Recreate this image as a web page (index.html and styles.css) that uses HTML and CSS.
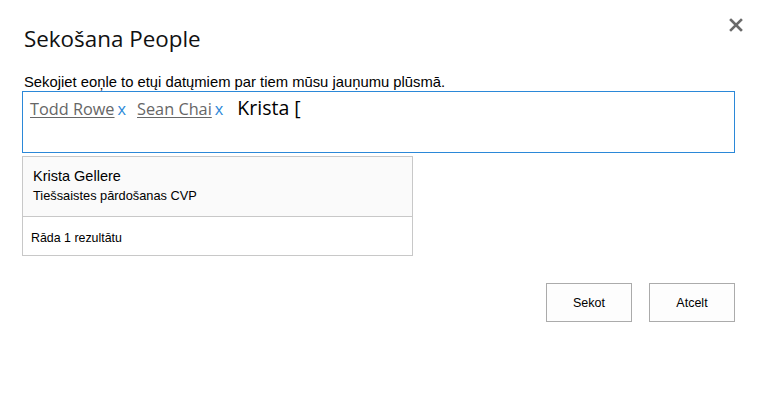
FILE: index.html
```html
<!DOCTYPE html>
<html lang="lv">
<head>
<meta charset="UTF-8" />
<title>Sekošana People</title>
<link rel="stylesheet" href="styles.css">
</head>
<body>
  <div class="dialog">
    <div class="dialog-head">
      <h1>Sekošana People</h1>
      <button class="close-btn" type="button" aria-label="Aizvērt">
        <svg width="14" height="14" viewBox="0 0 14 14"><path d="M2 2 L12 12 M12 2 L2 12" stroke="#6b6b6b" stroke-width="2.6" stroke-linecap="square"/></svg>
      </button>
    </div>

    <p class="hint">Sekojiet eon̦le to etųi datųmiem par tiem mūsu jauņumu plūsmā.</p>

    <div class="picker">
      <span class="token"><span class="token-name">Todd Rowe</span><span class="token-x">x</span></span>
      <span class="token"><span class="token-name">Sean Chai</span><span class="token-x">x</span></span>
      <span class="typed">Krista [</span>
    </div>

    <div class="suggest">
      <div class="suggest-item">
        <div class="suggest-name">Krista Gellere</div>
        <div class="suggest-title">Tiešsaistes pārdošanas CVP</div>
      </div>
      <div class="suggest-foot">Rāda 1 rezultātu</div>
    </div>

    <div class="actions">
      <button type="button" class="btn">Sekot</button>
      <button type="button" class="btn">Atcelt</button>
    </div>
  </div>
</body>
</html>
```
FILE: styles.css
```css
* {
  box-sizing: border-box;
}
body {
  margin: 0;
  background: #fff;
  color: #000;
  font-family: 'Liberation Sans', Arial, sans-serif;
}
.dialog {
  width: 763px;
  padding: 15px 28px 0 22px;
}
.dialog-head {
  display: flex;
  justify-content: space-between;
  align-items: flex-start;
  padding-left: 2px;
}
.dialog-head h1 {
  margin: 9px 0 0;
  font-family: 'Open Sans', sans-serif;
  font-weight: 400;
  font-size: 22.4px;
  line-height: 30px;
  color: #111;
}
.close-btn {
  border: none;
  background: none;
  padding: 0;
  margin: 3px -8px 0 0;
  width: 14px;
  height: 14px;
  cursor: pointer;
}
.hint {
  margin: 20px 0 0 2px;
  font-size: 14.8px;
  line-height: 17px;
}
.picker {
  height: 62px;
  border: 1px solid #2b88d8;
  padding: 3px 7px;
  display: flex;
  align-items: baseline;
  gap: 11px;
  font-family: 'Open Sans', sans-serif;
}
.token {
  font-size: 16.3px;
  line-height: 24px;
}
.token-name {
  color: #666;
  text-decoration: underline;
  text-underline-offset: 2px;
}
.token-x {
  color: #2b88d8;
  margin-left: 3px;
}
.typed {
  margin-left: 3px;
  font-size: 19.5px;
  line-height: 26px;
  color: #000;
}
.suggest {
  width: 391px;
  margin-top: 3px;
  border: 1px solid #c8c8c8;
}
.suggest-item {
  background: #fafafa;
  padding: 10px 10px 12px;
  border-bottom: 1px solid #c8c8c8;
}
.suggest-name {
  font-size: 14.5px;
  line-height: 19px;
}
.suggest-title {
  margin-top: 2px;
  font-size: 12.8px;
  line-height: 16px;
}
.suggest-foot {
  padding: 13px 8px 9px;
  font-size: 12.4px;
  line-height: 16px;
}
.actions {
  display: flex;
  justify-content: flex-end;
  gap: 17px;
  margin-top: 27px;
}
.btn {
  width: 86px;
  height: 39px;
  border: 1px solid #ababab;
  background: #fdfdfd;
  font-family: 'Liberation Sans', Arial, sans-serif;
  font-size: 12.5px;
  color: #000;
  cursor: pointer;
}
```
